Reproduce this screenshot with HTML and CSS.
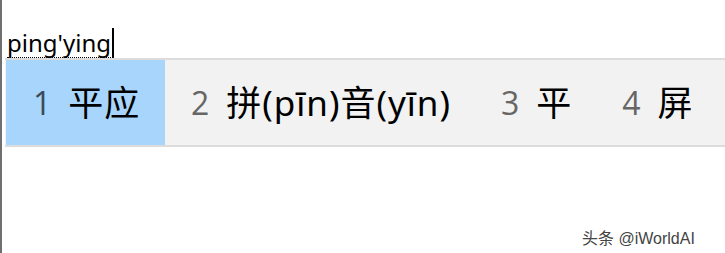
FILE: index.html
```
<!DOCTYPE html>
<html lang="zh-CN">
<head>
	<meta charset="UTF-8">
	<title>拼音输入法候选框</title>
	<link rel="stylesheet" href="styles.css">
</head>
<body>
	<div class="screen">
		<div class="comp">
			<span class="comp-text">ping'ying</span><span class="caret"></span>
		</div>
		<div class="cands">
			<div class="cand active"><span class="num">1</span><span class="word">平应</span></div>
			<div class="cand"><span class="num">2</span><span class="word">拼(pīn)音(yīn)</span></div>
			<div class="cand"><span class="num">3</span><span class="word">平</span></div>
			<div class="cand"><span class="num">4</span><span class="word">屏</span></div>
		</div>
		<div class="mark">头条 @iWorldAI</div>
	</div>
</body>
</html>
```
FILE: styles.css
```
*{
	padding:0;
	margin:0;
	box-sizing:border-box;
}
html,body{
	width:725px;
	height:253px;
	overflow:hidden;
	background:#fff;
}
.screen{
	position:relative;
	height:253px;
	border-left:2px solid #6f6f6f;
	padding-top:27px;
	padding-left:3px;
	font-family:"Noto Sans","Noto Sans CJK SC",sans-serif;
}
.comp{
	display:flex;
	align-items:flex-end;
	height:31px;
	padding-left:2px;
}
.comp-text{
	font-size:24px;
	line-height:28px;
	color:#000;
	border-bottom:1px dotted #000;
}
.caret{
	width:2px;
	height:30px;
	background:#000;
	margin-left:1px;
}
.cands{
	display:flex;
	height:89px;
	border-top:2px solid #dcdcdc;
	border-bottom:2px solid #dcdcdc;
	background:#f2f2f2;
	white-space:nowrap;
	overflow:hidden;
}
.cand{
	display:flex;
	align-items:center;
	padding:0 24px 0 26px;
	color:#000;
	line-height:1;
}
.cand.active{
	width:159px;
	flex:none;
	padding-left:27px;
	background:#a7d5fb;
	margin-left:1px;
}
.num{
	color:#666;
	margin-right:17px;
	font-family:"Open Sans","Noto Sans",sans-serif;
	font-size:32px;
}
.cand.active .num{
	color:#3a4a5a;
}
.word{
	font-size:35px;
	letter-spacing:1px;
	font-family:"Noto Sans","Noto Sans CJK SC",sans-serif;
}
.mark{
	position:absolute;
	left:580px;
	top:225px;
	font-size:16px;
	color:#444;
	font-family:"Liberation Sans","Noto Sans CJK SC",sans-serif;
}
```
